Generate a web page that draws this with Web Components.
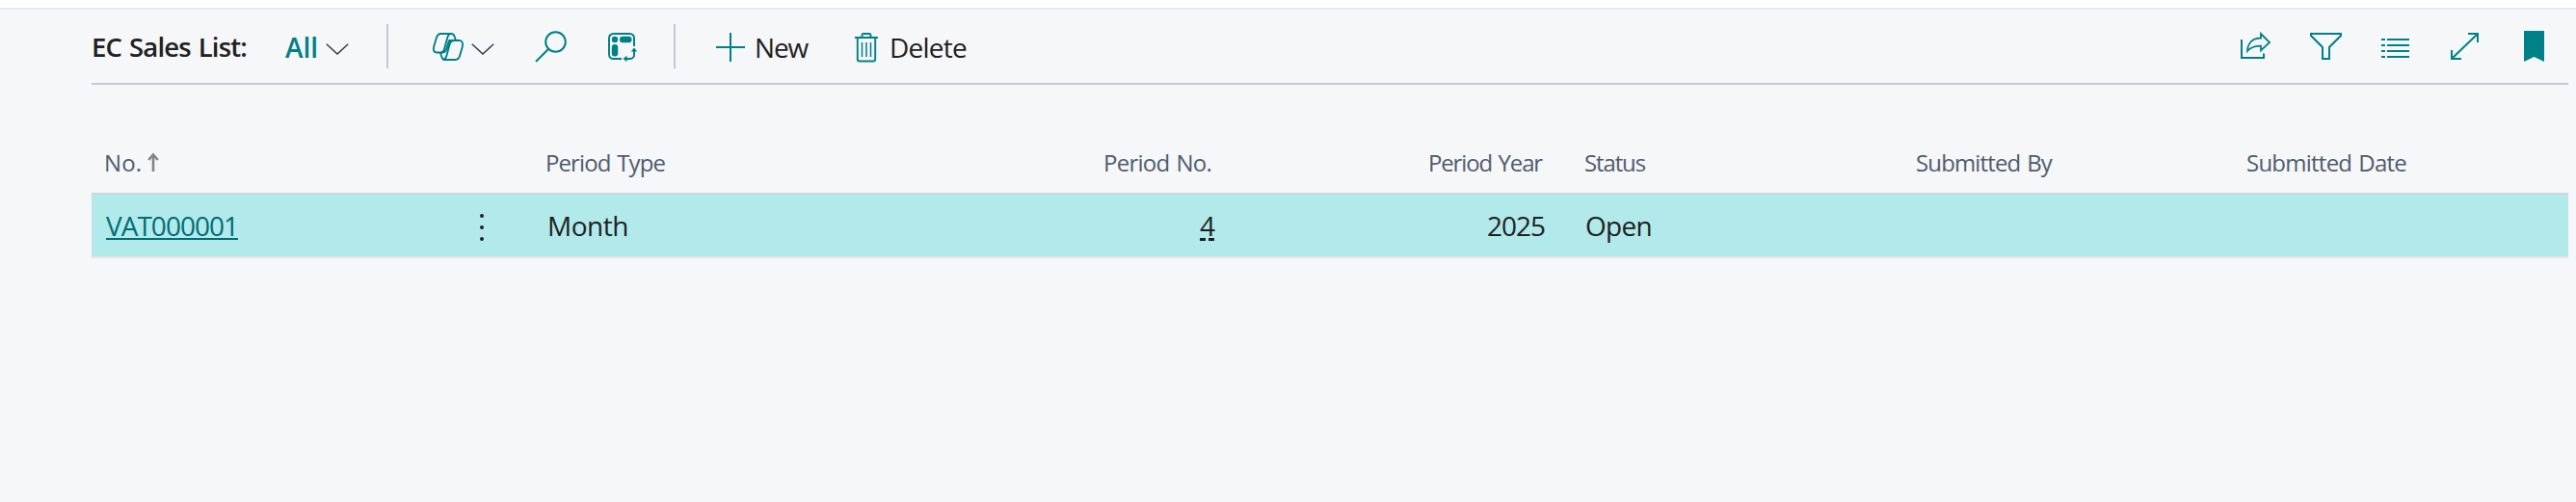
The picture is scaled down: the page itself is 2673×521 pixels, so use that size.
<!DOCTYPE html>
<html lang="en">
<head>
<meta charset="utf-8">
<title>EC Sales List</title>
<style>
html,body{margin:0;height:100%;background:#f5f7f9;overflow:hidden}
body{font-family:"Open Sans","Noto Sans",sans-serif;color:#212121}
</style>
</head>
<body>
<sales-list-page></sales-list-page>
<script>
const ICONS={
 chevron:[24,12,'<path d="M.8.8 12 11 23.2.8" stroke="#33334a" stroke-width="1.4"/>'],
 copilot:[32,29,'<g stroke-width="1.900"><path d="M8.5 1H19c2 0 3 1 3.5 2.500L23.800 7.500M8.500 1C5.500 1 4.500 3 3.800 5.500L1.300 14C.3 18 1 20.500 4.500 20.500H10c2.500 0 3.500-1.200 4.200-3.500L17 8M23.500 28H13c-2 0-3-1-3.500-2.500L8 21M23.500 28c3 0 4-2 4.700-4.500L30.700 15c1-4 .3-7-3.200-7H22c-2.500 0-3.500 1.200-4.200 3.500L15 21.500C14 25 14 28 10.500 28"/><path d="M19 1c-2 0-3 1.500-3.700 4L12 17c-.7 2.500-1.500 3.500-3.500 3.500M16.500 8h7"/></g>'],
 search:[33,33,'<circle cx="21.500" cy="11.500" r="10.300" stroke-width="2"/><path d="M14.200 18.800 1 32" stroke-width="2"/>'],
 layout:[31,31,'<path d="M27 14V5.500A4.500 4.500 0 0 0 22.500 1H5.500A4.500 4.500 0 0 0 1 5.500V22.500a4.500 4.500 0 0 0 4.500 4.500H14" stroke-width="2"/><g fill="#008089" stroke="none"><circle cx="7" cy="7" r="3.200"/><rect x="12" y="3.800" width="12.500" height="6.400" rx="3"/><rect x="3.800" y="12" width="6.400" height="12.500" rx="3"/><path d="M27 15.500 30.300 19.500H23.700ZM15.500 27 19.500 23.700V30.300Z"/></g><path d="M18.500 27H23a4 4 0 0 0 4-4V18.500" stroke-width="2"/>'],
 plus:[30,30,'<path d="M15 0v30M0 15h30" stroke-width="2"/>'],
 trash:[24,31,'<path d="M0 5h24M7.500 5V2.500Q7.500 1 9 1h6q1.500 0 1.500 1.500V5M2.800 5v22.500Q2.800 29.500 4.800 29.500h14.400q2 0 2-2V5" stroke-width="1.900"/><path d="M7.500 10v15M12 10v15M16.500 10v15" stroke-width="1.500"/>'],
 share:[32,29,'<path d="M1 8v19h23v-4.500" stroke-width="2"/><path d="M21 2v4.500C13 6.500 7.500 11 7 20c3.500-4 8-5.300 14-5.300V19.500L30 11Z" stroke-width="1.800"/>'],
 filter:[33,28,'<path d="M1 1h31v2L20 15v12h-7V15L1 3Z" stroke-width="2"/>'],
 list:[29,20,'<path d="M0 1h4M6 1h23M0 7h4M6 7h23M0 13h4M6 13h23M0 19h4M6 19h23" stroke-width="2"/>'],
 expand:[29,28,'<path d="M18 1h10v9M28 1 1 27M1 18v9h10" stroke-width="2"/>'],
 bookmark:[21,32,'<path d="M0 0h21v32l-10.500-5L0 32Z" fill="#008089" stroke="none"/>'],
 sort:[12,20,'<path d="M6 20V2M1.200 8 6 2.500 10.800 8" stroke="#858585" stroke-width="2.600"/>'],
 more:[4,28,'<g fill="#212121" stroke="none"><circle cx="2" cy="2" r="2"/><circle cx="2" cy="14" r="2"/><circle cx="2" cy="26" r="2"/></g>']
};

class UiIcon extends HTMLElement{
  constructor(){
    super();
    const [w,h,body]=ICONS[this.getAttribute('name')];
    this.attachShadow({mode:'open'}).innerHTML=`<style>:host{display:block;flex:none;width:${w}px;height:${h}px}svg{display:block;overflow:visible}</style>
    <svg width="${w}" height="${h}" viewBox="0 0 ${w} ${h}" fill="none" stroke="#008089">${body}</svg>`;
  }
}
customElements.define('ui-icon',UiIcon);

/* A label whose tracking is set so that it fills the width given in its "w" attribute. */
class UiLabel extends HTMLElement{
  constructor(){
    super();
    this.attachShadow({mode:'open'}).innerHTML=`<style>
    :host{display:block;flex:none;white-space:nowrap;line-height:38px;word-spacing:1.5px}
    span{display:inline-block}</style><span><slot></slot></span>`;
  }
  connectedCallback(){
    const w=+this.getAttribute('w'),s=this.shadowRoot.querySelector('span');
    s.style.letterSpacing='0px';
    s.style.letterSpacing=(w-s.getBoundingClientRect().width)/this.textContent.length+'px';
    this.style.width=w+'px';
  }
}
customElements.define('ui-label',UiLabel);

class ActionBar extends HTMLElement{
  constructor(){
    super();
    this.attachShadow({mode:'open'}).innerHTML=`<style>
    :host{display:flex;height:76px;margin:0 8px 0 95px;border-bottom:2px solid #c6c9d1;font-size:28px;align-items:flex-start}
    .title,.all{font-weight:600}.all{color:#008089}
    .sep{flex:none;width:2px;height:46px;background:#c6c9d1;margin-top:15px}
    ui-label{margin-top:20px}
    .right{margin-left:auto;display:flex;align-items:flex-start;padding-right:25px}
    </style>
    <ui-label class="title" w="161" style="font-size:27.5px">EC Sales List:</ui-label>
    <ui-label class="all" w="34" style="margin-left:40px">All</ui-label>
    <ui-icon name="chevron" style="margin:35px 0 0 8px"></ui-icon>
    <div class="sep" style="margin-left:39px"></div>
    <ui-icon name="copilot" style="margin:24px 0 0 46px"></ui-icon>
    <ui-icon name="chevron" style="margin:35px 0 0 8px"></ui-icon>
    <ui-icon name="search" style="margin:22px 0 0 42px"></ui-icon>
    <ui-icon name="layout" style="margin:24px 0 0 43px"></ui-icon>
    <div class="sep" style="margin-left:37px"></div>
    <ui-icon name="plus" style="margin:24px 0 0 42px"></ui-icon>
    <ui-label w="55" style="margin-left:10px">New</ui-label>
    <ui-icon name="trash" style="margin:24px 0 0 49px"></ui-icon>
    <ui-label w="80" style="margin-left:12px">Delete</ui-label>
    <div class="right">
      <ui-icon name="share" style="margin-top:23px"></ui-icon>
      <ui-icon name="filter" style="margin:24px 0 0 40px"></ui-icon>
      <ui-icon name="list" style="margin:30px 0 0 41px"></ui-icon>
      <ui-icon name="expand" style="margin:24px 0 0 43px"></ui-icon>
      <ui-icon name="bookmark" style="margin:22px 0 0 47px"></ui-icon>
    </div>`;
  }
}
customElements.define('action-bar',ActionBar);

class SalesTable extends HTMLElement{
  constructor(){
    super();
    this.attachShadow({mode:'open'}).innerHTML=`<style>
    :host{display:block;margin:62px 8px 0 95px}
    .head,.row{display:grid;grid-template-columns:347px 114px 344px 372px 343px 361px 344px 1fr}
    .head{height:50px;font-size:24px;color:#505c6d}
    .row{height:64px;font-size:28px;background:#b2eaeb;border-top:2px solid #d0d5d9;border-bottom:2px solid #e2e4e7}
    .head>div,.row>div{display:flex;align-items:flex-start;padding-left:10px}
    .row>div{padding-top:13px}
    .head .r{justify-content:flex-end;padding-right:15px}
    .row .r{justify-content:flex-end;padding-right:12px}
    a{color:#006d75;display:block;height:32px;border-bottom:2px solid #006d75}
    .four{height:32px;padding-bottom:3px;background:linear-gradient(90deg,#212121 6px,transparent 6px 9px,#212121 9px) bottom/15px 3px no-repeat}
    </style>
    <div class="head">
      <div style="padding-left:13px"><ui-label w="39">No.</ui-label><ui-icon name="sort" style="margin:8px 0 0 6px"></ui-icon></div>
      <div></div>
      <div><ui-label w="124">Period Type</ui-label></div>
      <div class="r"><ui-label w="112">Period No.</ui-label></div>
      <div class="r"><ui-label w="118">Period Year</ui-label></div>
      <div style="padding-left:29px"><ui-label w="63">Status</ui-label></div>
      <div style="padding-left:12px"><ui-label w="141">Submitted By</ui-label></div>
      <div style="padding-left:11px"><ui-label w="166">Submitted Date</ui-label></div>
    </div>
    <div class="row">
      <div style="padding-left:15px"><a><ui-label w="137">VAT000001</ui-label></a></div>
      <div style="padding-left:56px"><ui-icon name="more" style="margin-top:7px"></ui-icon></div>
      <div style="padding-left:12px"><ui-label w="84">Month</ui-label></div>
      <div class="r"><div class="four"><ui-label w="15">4</ui-label></div></div>
      <div class="r"><ui-label w="60">2025</ui-label></div>
      <div style="padding-left:30px"><ui-label w="69">Open</ui-label></div>
      <div></div><div></div>
    </div>`;
  }
}
customElements.define('sales-table',SalesTable);

class SalesListPage extends HTMLElement{
  constructor(){
    super();
    this.attachShadow({mode:'open'}).innerHTML=`<style>
    :host{display:block}
    .top{height:8px;background:#fff;border-bottom:2px solid #e9eaeb}
    </style><div class="top"></div><action-bar></action-bar><sales-table></sales-table>`;
  }
}
customElements.define('sales-list-page',SalesListPage);
</script>
</body>
</html>
